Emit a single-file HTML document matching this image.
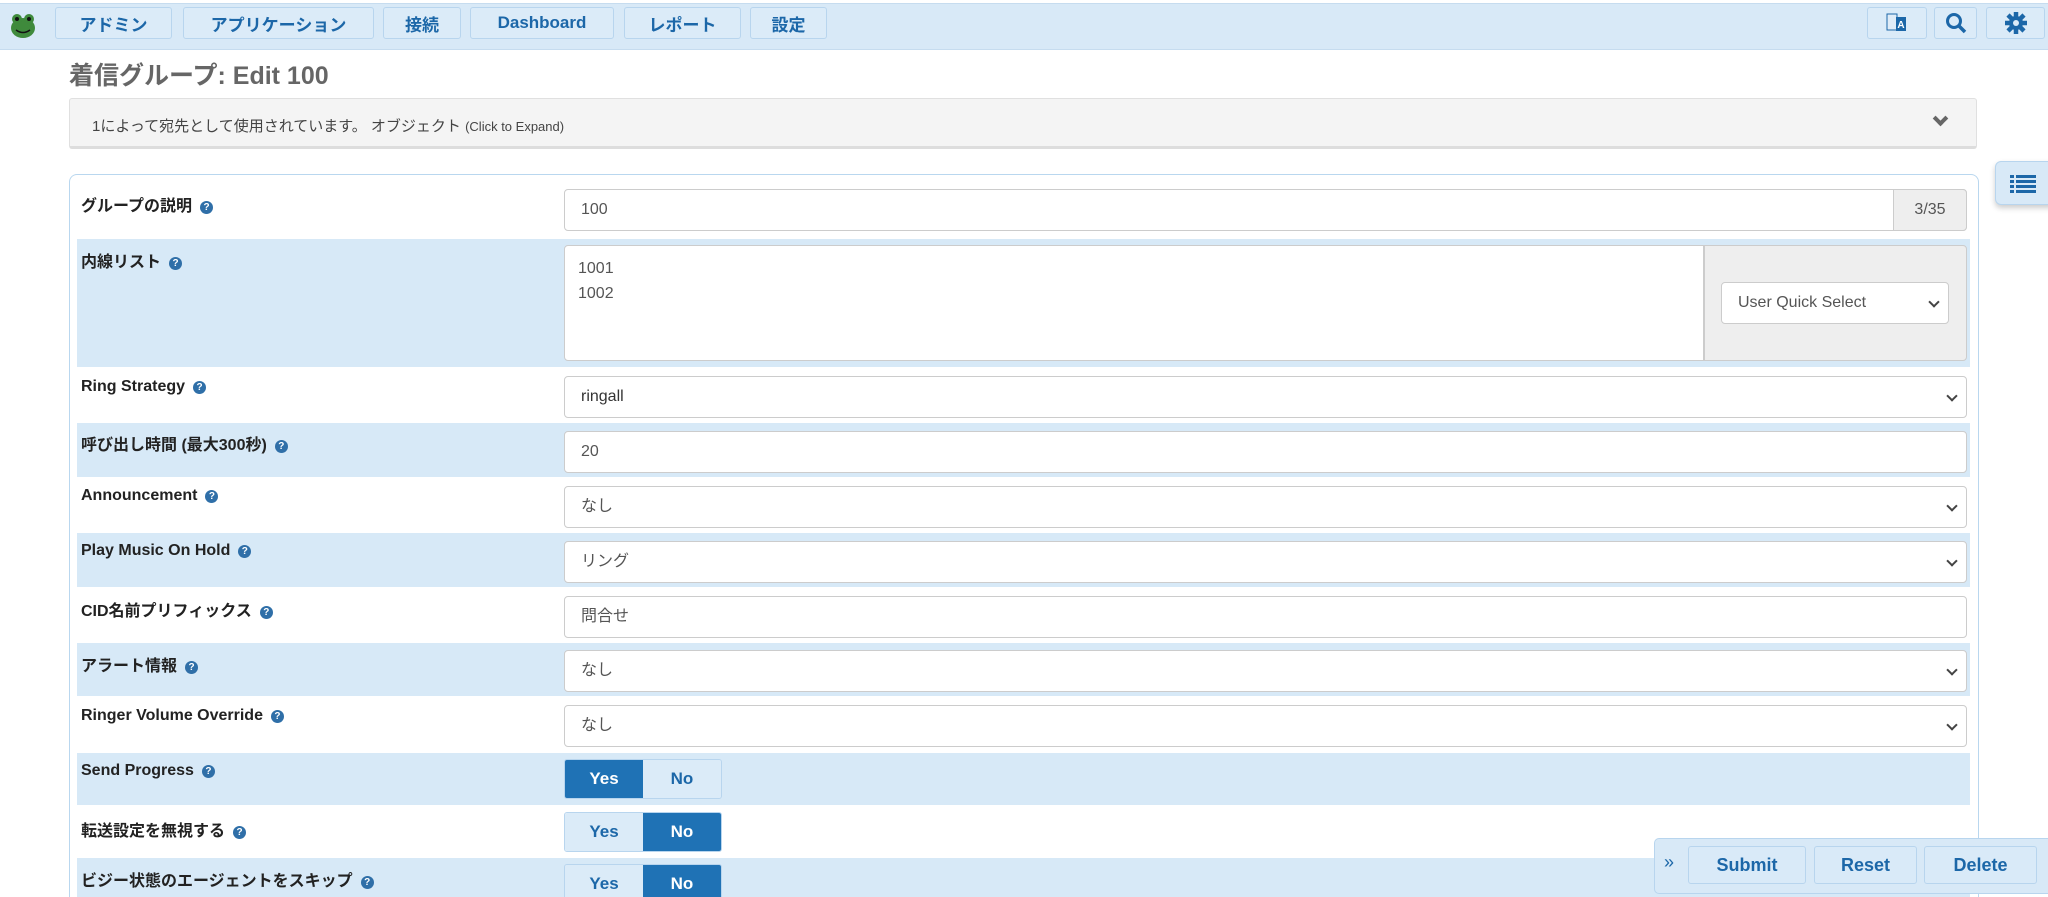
<!DOCTYPE html>
<html style="width:2048px;height:897px;overflow:hidden"><head><meta charset="utf-8"><style>
*{box-sizing:border-box;margin:0;padding:0}
body{width:2048px;height:897px;overflow:hidden;background:#fff;font-family:"Liberation Sans","Noto Sans CJK JP",sans-serif;position:relative;color:#333}
.nav{position:absolute;left:0;top:3px;width:2048px;height:47px;background:#d8e9f7;border-top:1px solid #c6dcef;border-bottom:1px solid #c6dcef}
.nb{position:absolute;top:7px;height:32px;border:1px solid #b8d5ee;border-radius:3px;background:#dbebf8;color:#1c67a8;font-weight:bold;font-size:17px;display:flex;align-items:center;justify-content:center}
.title{position:absolute;left:69px;top:56px;font-size:25px;font-weight:bold;color:#666}
.panel{position:absolute;left:69px;top:98px;width:1908px;height:51px;background:#f4f4f4;border:1px solid #e0e0e0;border-bottom:3px solid #ddd;border-radius:3px;font-size:15px;color:#444;padding:16px 22px}
.form{position:absolute;left:69px;top:174px;width:1910px;height:723px;border:1px solid #b9d7ef;border-bottom:none;border-radius:8px 8px 0 0}
.row{position:absolute;left:77px;width:1893px}
.blue{background:#d7e9f7}
.lbl{position:absolute;left:81px;font-size:16px;font-weight:bold;color:#222}
.q{display:inline-block;width:13px;height:13px;border-radius:50%;background:#2f6fa8;color:#fff;font-size:10px;text-align:center;line-height:13px;margin-left:8px;vertical-align:1px}
.inp{position:absolute;left:564px;width:1403px;height:42px;border:1px solid #ccc;border-radius:4px;background:#fff;font-size:16px;color:#555;padding:0 16px;line-height:40px}
.chev{position:absolute;right:10px;top:15px;width:8px;height:8px;border-right:2px solid #444;border-bottom:2px solid #444;transform:rotate(45deg)}
.tg{position:absolute;left:564px;width:158px;height:40px;display:flex;border:1px solid #b8d5ee;border-radius:3px;overflow:hidden;font-weight:bold;font-size:17px}
.tg div{width:79px;display:flex;align-items:center;justify-content:center;background:#dbebf8;color:#1c67a8}
.tg .on{background:#1f72b5;color:#fff}
.ab{position:absolute;top:846px;height:38px;border:1px solid #b8d5ee;border-radius:3px;background:#d9eaf8;color:#1c67a8;font-weight:bold;font-size:18px;display:flex;align-items:center;justify-content:center}
</style></head><body>
<div class="nav"></div>
<svg style="position:absolute;left:8px;top:13px" width="30" height="26" viewBox="0 0 30 26"><ellipse cx="15" cy="15" rx="12" ry="10" fill="#3f8a3c"/><circle cx="9" cy="6" r="5" fill="#3f8a3c"/><circle cx="21" cy="6" r="5" fill="#3f8a3c"/><circle cx="9" cy="6" r="2" fill="#111"/><circle cx="21" cy="6" r="2" fill="#111"/><path d="M8 17 Q15 22 22 17" stroke="#111" stroke-width="1.5" fill="none"/></svg>
<div class="nb" style="left:55px;width:117px">アドミン</div>
<div class="nb" style="left:183px;width:191px">アプリケーション</div>
<div class="nb" style="left:383px;width:78px">接続</div>
<div class="nb" style="left:470px;width:144px">Dashboard</div>
<div class="nb" style="left:624px;width:117px">レポート</div>
<div class="nb" style="left:750px;width:77px">設定</div>
<div class="nb" style="left:1867px;width:60px"><svg width="26" height="26" viewBox="0 0 26 26"><rect x="3" y="4" width="10" height="16" fill="#e0ecf7" stroke="#1c67a8"/><rect x="12" y="7" width="10" height="14" fill="#1c67a8"/><text x="17" y="18" font-size="10" fill="#fff" text-anchor="middle" font-family="Liberation Sans" font-weight="bold">A</text></svg></div>
<div class="nb" style="left:1934px;width:43px"><svg width="22" height="22" viewBox="0 0 22 22"><circle cx="9" cy="9" r="6.5" stroke="#1c67a8" stroke-width="3" fill="none"/><path d="M14 14l6 6" stroke="#1c67a8" stroke-width="3.5"/></svg></div>
<div class="nb" style="left:1986px;width:59px"><svg width="24" height="24" viewBox="0 0 24 24"><circle cx="12" cy="12" r="7" fill="#1c67a8"/><g stroke="#1c67a8" stroke-width="4.5"><path d="M12 1v22M1 12h22M4 4l16 16M20 4L4 20"/></g><circle cx="12" cy="12" r="3" fill="#dbebf8"/></svg></div>

<div class="title">着信グループ: Edit 100</div>
<div class="panel">1によって宛先として使用されています。 オブジェクト <span style="font-size:13px">(Click to Expand)</span>
<div style="position:absolute;right:30px;top:14px;width:11px;height:11px;border-right:4px solid #666;border-bottom:4px solid #666;transform:rotate(45deg)"></div></div>

<div style="position:absolute;left:1995px;top:161px;width:60px;height:44px;background:#d8e9f7;border:1px solid #b8d5ee;border-radius:6px;box-shadow:0 3px 6px rgba(0,0,0,.2)"><svg style="position:absolute;left:14px;top:12px" width="26" height="20" viewBox="0 0 26 20"><g fill="#1c67a8"><rect x="0" y="1" width="4" height="3"/><rect x="6" y="1" width="20" height="3"/><rect x="0" y="6" width="4" height="3"/><rect x="6" y="6" width="20" height="3"/><rect x="0" y="11" width="4" height="3"/><rect x="6" y="11" width="20" height="3"/><rect x="0" y="16" width="4" height="3"/><rect x="6" y="16" width="20" height="3"/></g></svg></div>

<div class="form"></div>
<div class="lbl" style="top:192px">グループの説明<span class="q">?</span></div>
<div class="inp" style="top:189px">100</div>
<div style="position:absolute;left:1893px;top:189px;width:74px;height:42px;background:#eee;border:1px solid #ccc;border-radius:0 4px 4px 0;font-size:16px;color:#555;text-align:center;line-height:40px">3/35</div>

<div class="row blue" style="top:239px;height:128px"></div>
<div class="lbl" style="top:248px">内線リスト<span class="q">?</span></div>
<div style="position:absolute;left:564px;top:245px;width:1140px;height:116px;background:#fff;border:1px solid #ccc;border-radius:4px 0 0 4px;font-size:16px;color:#555;padding:10px 13px;line-height:25px">1001<br>1002</div>
<div style="position:absolute;left:1704px;top:245px;width:263px;height:116px;background:#eee;border:1px solid #ccc;border-radius:0 4px 4px 0"></div>
<div class="inp" style="left:1721px;top:282px;width:228px;color:#555">User Quick Select<div class="chev"></div></div>

<div class="lbl" style="top:378px">Ring Strategy<span class="q">?</span></div>
<div class="inp" style="top:376px;color:#333">ringall<div class="chev"></div></div>

<div class="row blue" style="top:423px;height:54px"></div>
<div class="lbl" style="top:431px">呼び出し時間 (最大300秒)<span class="q">?</span></div>
<div class="inp" style="top:431px">20</div>

<div class="lbl" style="top:487px">Announcement<span class="q">?</span></div>
<div class="inp" style="top:486px">なし<div class="chev"></div></div>

<div class="row blue" style="top:533px;height:54px"></div>
<div class="lbl" style="top:542px">Play Music On Hold<span class="q">?</span></div>
<div class="inp" style="top:541px">リング<div class="chev"></div></div>

<div class="lbl" style="top:597px">CID名前プリフィックス<span class="q">?</span></div>
<div class="inp" style="top:596px">問合せ</div>

<div class="row blue" style="top:643px;height:53px"></div>
<div class="lbl" style="top:652px">アラート情報<span class="q">?</span></div>
<div class="inp" style="top:650px">なし<div class="chev"></div></div>

<div class="lbl" style="top:707px">Ringer Volume Override<span class="q">?</span></div>
<div class="inp" style="top:705px">なし<div class="chev"></div></div>

<div class="row blue" style="top:753px;height:52px"></div>
<div class="lbl" style="top:762px">Send Progress<span class="q">?</span></div>
<div class="tg" style="top:759px"><div class="on">Yes</div><div>No</div></div>

<div class="lbl" style="top:817px">転送設定を無視する<span class="q">?</span></div>
<div class="tg" style="top:812px"><div>Yes</div><div class="on">No</div></div>

<div class="row blue" style="top:858px;height:39px"></div>
<div class="lbl" style="top:867px">ビジー状態のエージェントをスキップ<span class="q">?</span></div>
<div class="tg" style="top:864px"><div>Yes</div><div class="on">No</div></div>

<div style="position:absolute;left:1654px;top:838px;width:400px;height:56px;background:#d8e9f7;border:1px solid #b8d5ee;border-radius:5px"></div>
<div style="position:absolute;left:1664px;top:852px;color:#1c67a8;font-size:18px">»</div>
<div class="ab" style="left:1688px;width:118px">Submit</div>
<div class="ab" style="left:1814px;width:103px">Reset</div>
<div class="ab" style="left:1924px;width:113px">Delete</div>
</body></html>
